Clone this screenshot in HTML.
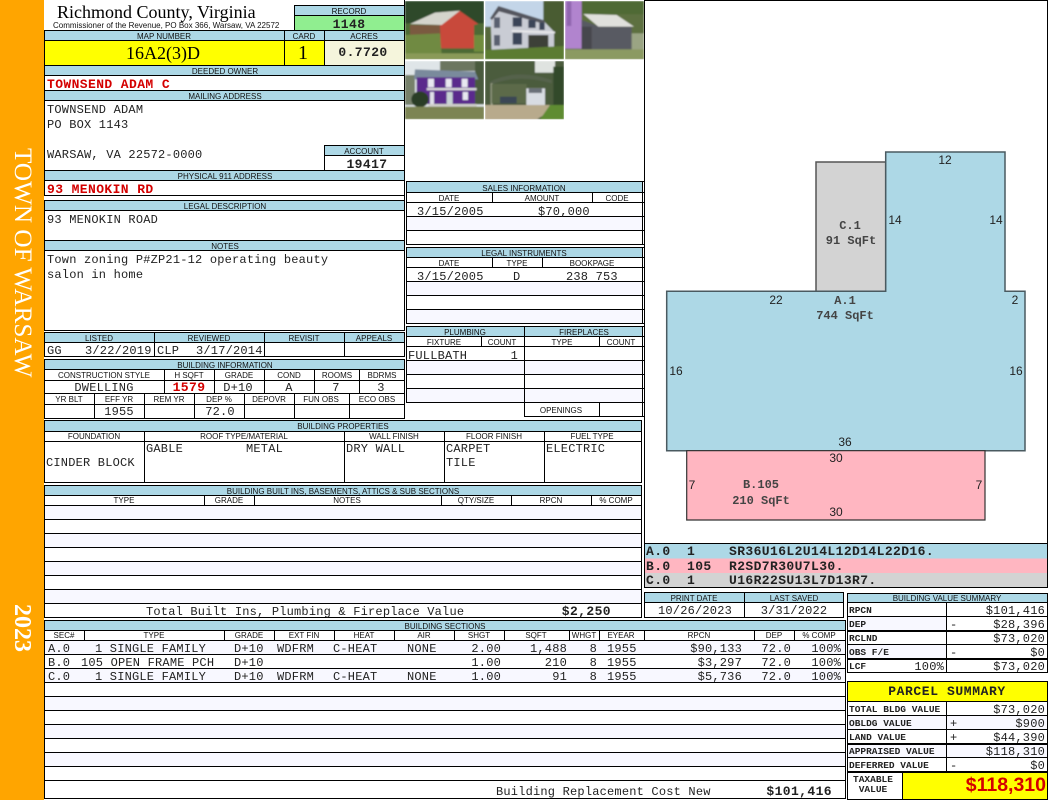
<!DOCTYPE html>
<html><head><meta charset="utf-8"><title>Richmond County, Virginia</title>
<style>
html,body{margin:0;padding:0;background:#fff;width:1050px;height:800px;overflow:hidden}
svg{display:block}
text{white-space:pre}
.l{font:8px "Liberation Sans",sans-serif;fill:#111;text-anchor:middle}
.m{font:12px "Liberation Mono",monospace;letter-spacing:.2px;fill:#222}
.b{font:bold 13px "Liberation Mono",monospace;letter-spacing:.4px;fill:#222}
.red{fill:#d40000}
.s{font:bold 9.5px "Liberation Mono",monospace;fill:#222}
.d{font:12px "Liberation Sans",sans-serif;fill:#222;text-anchor:middle}
.k{font:bold 12px "Liberation Mono",monospace;fill:#444;text-anchor:middle}
.c{text-anchor:middle}.r{text-anchor:end}
.g line{stroke:#000;stroke-width:1;shape-rendering:crispEdges}
.t{stroke:#000;stroke-width:1;fill:none;shape-rendering:crispEdges}
</style></head><body>
<svg width="1050" height="800" viewBox="0 0 1050 800" xmlns="http://www.w3.org/2000/svg">
<rect width="1050" height="800" fill="#fff"/>
<rect width="44" height="800" fill="#ffa500"/>
<text transform="translate(15,148) rotate(90)" font-family="Liberation Serif,serif" font-size="25.2" fill="#fff">TOWN OF WARSAW</text>
<text transform="translate(15,604) rotate(90)" font-family="Liberation Serif,serif" font-weight="bold" font-size="24" fill="#fff">2023</text>

<!-- fills -->
<g fill="#add8e6">
<rect x="294" y="5" width="111" height="10"/>
<rect x="44" y="30" width="361" height="10"/>
<rect x="44" y="65" width="361" height="10"/>
<rect x="44" y="90" width="361" height="10"/>
<rect x="324" y="145" width="81" height="10"/>
<rect x="44" y="170" width="361" height="10"/>
<rect x="44" y="200" width="361" height="10"/>
<rect x="44" y="240" width="361" height="10"/>
<rect x="44" y="332" width="361" height="10"/>
<rect x="44" y="359" width="361" height="10"/>
<rect x="44" y="420" width="598" height="11"/>
<rect x="44" y="485" width="598" height="10"/>
<rect x="44" y="620" width="802" height="10"/>
<rect x="406" y="182" width="237" height="10"/>
<rect x="406" y="247" width="237" height="10"/>
<rect x="406" y="326" width="237" height="10"/>
<rect x="645" y="592" width="198" height="10"/>
<rect x="847" y="593" width="200" height="9"/>
</g>
<rect x="294" y="16" width="111" height="14" fill="#90ee90"/>
<rect x="44" y="41" width="280" height="24" fill="#ff0"/>
<rect x="324" y="41" width="81" height="24" fill="#f5f5dc"/>
<rect x="847" y="682" width="200" height="19" fill="#ff0"/>
<rect x="903" y="771" width="144" height="28" fill="#ff0"/>
<g fill="#f8f8ff">
<rect x="44" y="505" width="598" height="14"/><rect x="44" y="533" width="598" height="14"/><rect x="44" y="561" width="598" height="14"/><rect x="44" y="589" width="598" height="14"/>
<rect x="44" y="640" width="802" height="14"/><rect x="44" y="668" width="802" height="14"/><rect x="44" y="696" width="802" height="14"/><rect x="44" y="724" width="802" height="14"/><rect x="44" y="752" width="802" height="14"/>
<rect x="406" y="216" width="237" height="14"/>
<rect x="406" y="281" width="237" height="14"/><rect x="406" y="309" width="237" height="14"/>
<rect x="406" y="360" width="237" height="14"/><rect x="406" y="388" width="237" height="14"/>
<rect x="847" y="616" width="100" height="14"/><rect x="847" y="644" width="100" height="14"/>
<rect x="847" y="715" width="200" height="14"/><rect x="847" y="743" width="200" height="14"/>
</g>

<!-- photos -->
<defs><filter id="bl" x="0" y="0" width="1" height="1"><feGaussianBlur stdDeviation="2.6"/></filter>
<clipPath id="p1"><rect x="15" y="3" width="237" height="175"/></clipPath>
<clipPath id="p2"><rect x="255" y="3" width="237" height="175"/></clipPath>
<clipPath id="p3"><rect x="495" y="3" width="237" height="175"/></clipPath>
<clipPath id="p4"><rect x="15" y="183" width="237" height="175"/></clipPath>
<clipPath id="p5"><rect x="255" y="183" width="237" height="175"/></clipPath></defs>
<g transform="translate(400,0) scale(.33333)">
<g clip-path="url(#p1)"><g filter="url(#bl)">
<rect x="15" y="3" width="237" height="175" fill="#2e4a2c"/>
<rect x="15" y="70" width="237" height="108" fill="#4e6b34"/>
<polygon points="30,75 120,75 120,110 30,110" fill="#7a5a40"/>
<polygon points="120,75 178,32 235,72 222,75 222,145 122,145" fill="#c8483a"/>
<polygon points="30,72 105,38 180,32 125,75" fill="#d4d4cc"/>
<polygon points="15,105 120,100 125,165 15,165" fill="#6f8a42"/>
<rect x="222" y="105" width="30" height="50" fill="#6f8c3e"/>
<rect x="15" y="160" width="237" height="18" fill="#8a9a58"/>
</g></g>
<g clip-path="url(#p2)"><g filter="url(#bl)">
<rect x="255" y="3" width="237" height="175" fill="#c3d5e8"/>
<rect x="430" y="3" width="62" height="150" fill="#4a5c30"/>
<rect x="255" y="80" width="20" height="70" fill="#54683a"/>
<polygon points="272,55 295,18 430,62 462,95 462,150 370,158 275,150" fill="#c9ccd4"/>
<polygon points="270,55 295,18 435,62 433,72 297,34 276,60" fill="#55565e"/>
<rect x="282" y="52" width="18" height="32" fill="#5a6070"/><rect x="338" y="52" width="28" height="28" fill="#3a4558"/><rect x="385" y="60" width="22" height="24" fill="#3a4558"/><rect x="418" y="68" width="16" height="22" fill="#3a4558"/>
<rect x="282" y="105" width="18" height="32" fill="#5a6070"/><rect x="338" y="98" width="28" height="36" fill="#3a4558"/>
<polygon points="335,90 465,95 465,100 335,96" fill="#e8e8ea"/>
<rect x="385" y="105" width="60" height="48" fill="#3d4038"/>
<polygon points="255,150 492,138 492,178 255,178" fill="#5c7c30"/>
</g></g>
<g clip-path="url(#p3)"><g filter="url(#bl)">
<rect x="495" y="3" width="237" height="175" fill="#5d7040"/>
<rect x="545" y="3" width="187" height="40" fill="#4f6a36"/>
<rect x="690" y="100" width="42" height="50" fill="#9aa483"/>
<rect x="495" y="3" width="50" height="143" fill="#b184ce"/>
<rect x="500" y="3" width="14" height="75" fill="#9066b0"/>
<polygon points="545,60 600,80 695,80 695,155 545,155" fill="#585a62"/>
<rect x="545" y="80" width="30" height="75" fill="#46464e"/>
<polygon points="550,42 650,45 702,80 595,80" fill="#e0e0dc"/>
<rect x="495" y="148" width="237" height="30" fill="#8b9a62"/>
</g></g>
<g clip-path="url(#p4)"><g filter="url(#bl)">
<rect x="15" y="183" width="237" height="175" fill="#dfe5e8"/>
<rect x="120" y="183" width="132" height="30" fill="#6c7660"/>
<rect x="225" y="183" width="27" height="130" fill="#4a5a3c"/>
<rect x="15" y="225" width="30" height="90" fill="#76806a"/>
<polygon points="45,208 225,215 235,238 42,238" fill="#7a8a9c"/>
<rect x="50" y="232" width="175" height="80" fill="#5a2c8c"/>
<rect x="84" y="236" width="18" height="26" fill="#e8e8f0"/><rect x="137" y="236" width="18" height="26" fill="#e8e8f0"/><rect x="185" y="236" width="18" height="26" fill="#e8e8f0"/>
<rect x="80" y="264" width="150" height="7" fill="#d8d8d8"/>
<rect x="140" y="276" width="18" height="36" fill="#c8d4d4"/><rect x="188" y="276" width="16" height="24" fill="#e8e8f0"/><rect x="90" y="276" width="12" height="36" fill="#e0e0e8"/>
<rect x="85" y="312" width="145" height="8" fill="#cfcfca"/>
<ellipse cx="60" cy="298" rx="26" ry="24" fill="#2a3c28"/>
<rect x="15" y="320" width="237" height="38" fill="#7c8452"/>
</g></g>
<g clip-path="url(#p5)"><g filter="url(#bl)">
<rect x="255" y="183" width="237" height="175" fill="#4c5c3c"/>
<rect x="405" y="183" width="60" height="35" fill="#dfe3e0"/>
<rect x="460" y="200" width="32" height="115" fill="#33482c"/>
<path d="M270 245 Q350 205 455 240 L455 250 Q350 220 272 255Z" fill="#55624c"/>
<rect x="272" y="250" width="6" height="65" fill="#a0a48e"/>
<rect x="275" y="252" width="105" height="58" fill="#5c6a4a"/>
<rect x="300" y="290" width="50" height="20" fill="#3a4654"/>
<rect x="379" y="265" width="56" height="50" fill="#d8dce2"/>
<rect x="386" y="265" width="40" height="14" fill="#6a7078"/>
<polygon points="255,315 450,315 440,340 410,358 255,358" fill="#b8aa8c"/>
<polygon points="450,315 492,315 492,358 420,358" fill="#5f8c30"/>
</g></g>
</g>

<!-- sketch -->
<rect x="644.5" y="0.5" width="403" height="543" class="t"/>
<rect x="645" y="544" width="402" height="14.5" fill="#add8e6"/>
<rect x="645" y="558.5" width="402" height="14.5" fill="#ffb6c1"/>
<rect x="645" y="573" width="402" height="14.5" fill="#d3d3d3"/>
<rect x="644.5" y="543.5" width="403" height="44" class="t"/>
<polygon points="816,162 885.7,162 885.7,291.3 816,291.3" fill="#d3d3d3" stroke="#555" stroke-width="1.5"/>
<polygon points="666.7,291.3 885.7,291.3 885.7,152 1005,152 1005,291.3 1025,291.3 1025,450.7 666.7,450.7" fill="#add8e6" stroke="#4a5a60" stroke-width="1.5"/>
<polygon points="686.7,450.7 985,450.7 985,520 686.7,520" fill="#ffb6c1" stroke="#333" stroke-width="1.2"/>
<text class="k" x="850" y="229">C.1</text><text class="k" x="851" y="244">91 SqFt</text>
<text class="k" x="845" y="304">A.1</text><text class="k" x="845" y="319">744 SqFt</text>
<text class="k" x="761" y="488">B.105</text><text class="k" x="761" y="504">210 SqFt</text>
<text class="d" x="945" y="164">12</text><text class="d" x="895" y="224">14</text><text class="d" x="996" y="224">14</text>
<text class="d" x="776" y="304">22</text><text class="d" x="1015" y="304">2</text>
<text class="d" x="676" y="375">16</text><text class="d" x="1016" y="375">16</text>
<text class="d" x="845" y="446">36</text><text class="d" x="836" y="462">30</text><text class="d" x="836" y="516">30</text>
<text class="d" x="692" y="489">7</text><text class="d" x="979" y="489">7</text>
<g class="b"><text class="b" x="646" y="555">A.0</text><text class="b" x="687" y="555">1</text><text class="b" x="729" y="555">SR36U16L2U14L12D14L22D16.</text>
<text class="b" x="646" y="570">B.0</text><text class="b" x="687" y="570">105</text><text class="b" x="729" y="570">R2SD7R30U7L30.</text>
<text class="b" x="646" y="584">C.0</text><text class="b" x="687" y="584">1</text><text class="b" x="729" y="584">U16R22SU13L7D13R7.</text></g>

<!-- grid lines -->
<g class="g">
<line x1="294" x2="405" y1="5.5" y2="5.5"/><line x1="294" x2="405" y1="15.5" y2="15.5"/><line x1="294.5" x2="294.5" y1="5" y2="30"/>
<line x1="44" x2="405" y1="30.5" y2="30.5"/><line x1="44" x2="405" y1="40.5" y2="40.5"/><line x1="44" x2="405" y1="65.5" y2="65.5"/><line x1="44" x2="405" y1="75.5" y2="75.5"/><line x1="44" x2="405" y1="90.5" y2="90.5"/><line x1="44" x2="405" y1="100.5" y2="100.5"/>
<line x1="324" x2="405" y1="145.5" y2="145.5"/><line x1="324" x2="405" y1="155.5" y2="155.5"/><line x1="324.5" x2="324.5" y1="145" y2="170"/>
<line x1="44" x2="405" y1="170.5" y2="170.5"/><line x1="44" x2="405" y1="180.5" y2="180.5"/><line x1="44" x2="405" y1="195.5" y2="195.5"/>
<line x1="284.5" x2="284.5" y1="30" y2="65"/><line x1="324.5" x2="324.5" y1="30" y2="65"/>
<line x1="44" x2="405" y1="200.5" y2="200.5"/><line x1="44" x2="405" y1="210.5" y2="210.5"/><line x1="44" x2="405" y1="240.5" y2="240.5"/><line x1="44" x2="405" y1="250.5" y2="250.5"/><line x1="44" x2="405" y1="330.5" y2="330.5"/>
<line x1="44.5" x2="44.5" y1="30" y2="195"/><line x1="44.5" x2="44.5" y1="200" y2="330"/><line x1="404.5" x2="404.5" y1="0" y2="195"/><line x1="404.5" x2="404.5" y1="195" y2="330"/>
<line x1="44" x2="405" y1="332.5" y2="332.5"/><line x1="44" x2="405" y1="342.5" y2="342.5"/><line x1="44" x2="405" y1="356.5" y2="356.5"/>
<line x1="44.5" x2="44.5" y1="332" y2="356"/><line x1="404.5" x2="404.5" y1="332" y2="356"/><line x1="154.5" x2="154.5" y1="332" y2="356"/><line x1="264.5" x2="264.5" y1="332" y2="356"/><line x1="344.5" x2="344.5" y1="332" y2="356"/>
<line x1="44" x2="405" y1="359.5" y2="359.5"/><line x1="44" x2="405" y1="369.5" y2="369.5"/><line x1="44" x2="405" y1="380.5" y2="380.5"/><line x1="44" x2="405" y1="393.5" y2="393.5"/><line x1="44" x2="405" y1="404.5" y2="404.5"/><line x1="44" x2="405" y1="418.5" y2="418.5"/>
<line x1="44.5" x2="44.5" y1="359" y2="418"/><line x1="404.5" x2="404.5" y1="359" y2="418"/>
<line x1="164.5" x2="164.5" y1="369" y2="393"/><line x1="214.5" x2="214.5" y1="369" y2="393"/><line x1="264.5" x2="264.5" y1="369" y2="393"/><line x1="314.5" x2="314.5" y1="369" y2="393"/><line x1="359.5" x2="359.5" y1="369" y2="393"/>
<line x1="94.5" x2="94.5" y1="393" y2="418"/><line x1="144.5" x2="144.5" y1="393" y2="418"/><line x1="194.5" x2="194.5" y1="393" y2="418"/><line x1="244.5" x2="244.5" y1="393" y2="418"/><line x1="294.5" x2="294.5" y1="393" y2="418"/><line x1="349.5" x2="349.5" y1="393" y2="418"/>
<line x1="44" x2="642" y1="420.5" y2="420.5"/><line x1="44" x2="642" y1="431.5" y2="431.5"/><line x1="44" x2="642" y1="441.5" y2="441.5"/><line x1="44" x2="642" y1="482.5" y2="482.5"/>
<line x1="44.5" x2="44.5" y1="420" y2="482"/><line x1="641.5" x2="641.5" y1="420" y2="482"/>
<line x1="144.5" x2="144.5" y1="431" y2="482"/><line x1="344.5" x2="344.5" y1="431" y2="482"/><line x1="444.5" x2="444.5" y1="431" y2="482"/><line x1="544.5" x2="544.5" y1="431" y2="482"/>
<line x1="44" x2="642" y1="485.5" y2="485.5"/><line x1="44" x2="642" y1="495.5" y2="495.5"/><line x1="44" x2="642" y1="505.5" y2="505.5"/><line x1="44" x2="642" y1="519.5" y2="519.5"/><line x1="44" x2="642" y1="533.5" y2="533.5"/><line x1="44" x2="642" y1="547.5" y2="547.5"/><line x1="44" x2="642" y1="561.5" y2="561.5"/><line x1="44" x2="642" y1="575.5" y2="575.5"/><line x1="44" x2="642" y1="589.5" y2="589.5"/><line x1="44" x2="642" y1="603.5" y2="603.5"/><line x1="44" x2="642" y1="617.5" y2="617.5"/>
<line x1="44.5" x2="44.5" y1="485" y2="617"/><line x1="641.5" x2="641.5" y1="485" y2="617"/>
<line x1="204.5" x2="204.5" y1="495" y2="505"/><line x1="254.5" x2="254.5" y1="495" y2="505"/><line x1="441.5" x2="441.5" y1="495" y2="505"/><line x1="511.5" x2="511.5" y1="495" y2="505"/><line x1="591.5" x2="591.5" y1="495" y2="505"/>
<line x1="44" x2="846" y1="620.5" y2="620.5"/><line x1="44" x2="846" y1="630.5" y2="630.5"/><line x1="44" x2="846" y1="640.5" y2="640.5"/><line x1="44" x2="846" y1="654.5" y2="654.5"/><line x1="44" x2="846" y1="668.5" y2="668.5"/><line x1="44" x2="846" y1="682.5" y2="682.5"/><line x1="44" x2="846" y1="696.5" y2="696.5"/><line x1="44" x2="846" y1="710.5" y2="710.5"/><line x1="44" x2="846" y1="724.5" y2="724.5"/><line x1="44" x2="846" y1="738.5" y2="738.5"/><line x1="44" x2="846" y1="752.5" y2="752.5"/><line x1="44" x2="846" y1="766.5" y2="766.5"/><line x1="44" x2="846" y1="780.5" y2="780.5"/><line x1="44" x2="846" y1="798.5" y2="798.5"/>
<line x1="44.5" x2="44.5" y1="620" y2="799"/><line x1="845.5" x2="845.5" y1="620" y2="799"/>
<line x1="84.5" x2="84.5" y1="630" y2="640"/><line x1="224.5" x2="224.5" y1="630" y2="640"/><line x1="274.5" x2="274.5" y1="630" y2="640"/><line x1="334.5" x2="334.5" y1="630" y2="640"/><line x1="394.5" x2="394.5" y1="630" y2="640"/><line x1="454.5" x2="454.5" y1="630" y2="640"/><line x1="504.5" x2="504.5" y1="630" y2="640"/><line x1="569.5" x2="569.5" y1="630" y2="640"/><line x1="599.5" x2="599.5" y1="630" y2="640"/><line x1="644.5" x2="644.5" y1="630" y2="640"/><line x1="754.5" x2="754.5" y1="630" y2="640"/><line x1="794.5" x2="794.5" y1="630" y2="640"/>
<line x1="406" x2="644" y1="181.5" y2="181.5"/><line x1="406" x2="644" y1="192.5" y2="192.5"/><line x1="406" x2="644" y1="202.5" y2="202.5"/><line x1="406" x2="644" y1="216.5" y2="216.5"/><line x1="406" x2="644" y1="230.5" y2="230.5"/><line x1="406" x2="644" y1="244.5" y2="244.5"/>
<line x1="406.5" x2="406.5" y1="181" y2="245"/><line x1="642.5" x2="642.5" y1="181" y2="245"/><line x1="492.5" x2="492.5" y1="192" y2="202"/><line x1="592.5" x2="592.5" y1="192" y2="202"/>
<line x1="406" x2="644" y1="247.5" y2="247.5"/><line x1="406" x2="644" y1="257.5" y2="257.5"/><line x1="406" x2="644" y1="267.5" y2="267.5"/><line x1="406" x2="644" y1="281.5" y2="281.5"/><line x1="406" x2="644" y1="295.5" y2="295.5"/><line x1="406" x2="644" y1="309.5" y2="309.5"/><line x1="406" x2="644" y1="323.5" y2="323.5"/>
<line x1="406.5" x2="406.5" y1="247" y2="324"/><line x1="642.5" x2="642.5" y1="247" y2="324"/><line x1="492.5" x2="492.5" y1="257" y2="267"/><line x1="542.5" x2="542.5" y1="257" y2="267"/>
<line x1="406" x2="644" y1="326.5" y2="326.5"/><line x1="406" x2="644" y1="336.5" y2="336.5"/><line x1="406" x2="644" y1="346.5" y2="346.5"/><line x1="406" x2="644" y1="360.5" y2="360.5"/><line x1="406" x2="644" y1="374.5" y2="374.5"/><line x1="406" x2="644" y1="388.5" y2="388.5"/><line x1="406" x2="644" y1="402.5" y2="402.5"/>
<line x1="524" x2="644" y1="416.5" y2="416.5"/>
<line x1="406.5" x2="406.5" y1="326" y2="403"/><line x1="642.5" x2="642.5" y1="326" y2="417"/><line x1="524.5" x2="524.5" y1="326" y2="417"/><line x1="481.5" x2="481.5" y1="336" y2="346"/><line x1="599.5" x2="599.5" y1="336" y2="346"/><line x1="599.5" x2="599.5" y1="402" y2="417"/>
<line x1="644" x2="844" y1="592.5" y2="592.5"/><line x1="644" x2="844" y1="602.5" y2="602.5"/><line x1="644" x2="844" y1="617.5" y2="617.5"/><line x1="644.5" x2="644.5" y1="592" y2="618"/><line x1="843.5" x2="843.5" y1="592" y2="618"/><line x1="744.5" x2="744.5" y1="592" y2="618"/>
<line x1="847" x2="1048" y1="593.5" y2="593.5"/><line x1="847" x2="1048" y1="602.5" y2="602.5"/><line x1="847" x2="1048" y1="616.5" y2="616.5"/><line x1="847" x2="1048" y1="644.5" y2="644.5"/><line x1="847" x2="1048" y1="672.5" y2="672.5"/>
<line x1="847.5" x2="847.5" y1="593" y2="673"/><line x1="1047.5" x2="1047.5" y1="593" y2="673"/><line x1="946.5" x2="946.5" y1="602" y2="673"/>
<line x1="847" x2="1048" y1="681.5" y2="681.5"/><line x1="847" x2="1048" y1="701.5" y2="701.5"/><line x1="847" x2="1048" y1="715.5" y2="715.5"/><line x1="847" x2="1048" y1="729.5" y2="729.5"/><line x1="847" x2="1048" y1="757.5" y2="757.5"/><line x1="847" x2="1048" y1="799.5" y2="799.5"/>
<line x1="847.5" x2="847.5" y1="681" y2="800"/><line x1="1047.5" x2="1047.5" y1="681" y2="800"/><line x1="946.5" x2="946.5" y1="701" y2="771"/><line x1="902.5" x2="902.5" y1="771" y2="800"/>
</g>
<g fill="#000"><rect x="847" y="630" width="201" height="2"/><rect x="847" y="658" width="201" height="2"/><rect x="847" y="743" width="201" height="2"/><rect x="847" y="771" width="201" height="2"/></g>

<!-- header text -->
<text x="57" y="18" font-family="Liberation Serif,serif" font-size="18" fill="#000">Richmond County, Virginia</text>
<text x="53" y="28" font-family="Liberation Sans,sans-serif" font-size="8" fill="#111">Commissioner of the Revenue, PO Box 366, Warsaw, VA 22572</text>
<text class="l" x="349" y="14">RECORD</text><text class="b c" x="349" y="28">1148</text>
<text class="l" x="164" y="39">MAP NUMBER</text><text class="l" x="304" y="39">CARD</text><text class="l" x="364" y="39">ACRES</text>
<text x="163" y="59" font-family="Liberation Serif,serif" font-size="18" text-anchor="middle" fill="#000">16A2(3)D</text>
<text x="303" y="59" font-family="Liberation Serif,serif" font-size="20" text-anchor="middle" fill="#000">1</text>
<text class="b c" x="363" y="56">0.7720</text>
<text class="l" x="225" y="74">DEEDED OWNER</text>
<text class="b red" x="47" y="88">TOWNSEND ADAM C</text>
<text class="l" x="225" y="99">MAILING ADDRESS</text>
<text class="m" x="47" y="113">TOWNSEND ADAM</text><text class="m" x="47" y="128">PO BOX 1143</text><text class="m" x="47" y="158">WARSAW, VA 22572-0000</text>
<text class="l" x="364" y="154">ACCOUNT</text><text class="b c" x="367" y="168">19417</text>
<text class="l" x="225" y="179">PHYSICAL 911 ADDRESS</text>
<text class="b red" x="47" y="193">93 MENOKIN RD</text>
<text class="l" x="225" y="209">LEGAL DESCRIPTION</text>
<text class="m" x="47" y="223">93 MENOKIN ROAD</text>
<text class="l" x="225" y="249">NOTES</text>
<text class="m" x="47" y="263">Town zoning P#ZP21-12 operating beauty</text><text class="m" x="47" y="278">salon in home</text>

<text class="l" x="99" y="341">LISTED</text><text class="l" x="209" y="341">REVIEWED</text><text class="l" x="304" y="341">REVISIT</text><text class="l" x="374" y="341">APPEALS</text>
<text class="m" x="47" y="354">GG</text><text class="m" x="85" y="354">3/22/2019</text><text class="m" x="157" y="354">CLP</text><text class="m" x="196" y="354">3/17/2014</text>
<text class="l" x="225" y="368">BUILDING INFORMATION</text>
<text class="l" x="104" y="378">CONSTRUCTION STYLE</text><text class="l" x="189" y="378">H SQFT</text><text class="l" x="239" y="378">GRADE</text><text class="l" x="289" y="378">COND</text><text class="l" x="337" y="378">ROOMS</text><text class="l" x="382" y="378">BDRMS</text>
<text class="m c" x="104" y="391">DWELLING</text><text class="b red c" x="189" y="391">1579</text><text class="m c" x="238" y="391">D+10</text><text class="m c" x="289" y="391">A</text><text class="m c" x="336" y="391">7</text><text class="m c" x="381" y="391">3</text>
<text class="l" x="69" y="402">YR BLT</text><text class="l" x="119" y="402">EFF YR</text><text class="l" x="169" y="402">REM YR</text><text class="l" x="219" y="402">DEP %</text><text class="l" x="269" y="402">DEPOVR</text><text class="l" x="321" y="402">FUN OBS</text><text class="l" x="377" y="402">ECO OBS</text>
<text class="m c" x="119" y="415">1955</text><text class="m c" x="220" y="415">72.0</text>

<text class="l" x="343" y="429">BUILDING PROPERTIES</text>
<text class="l" x="94" y="439">FOUNDATION</text><text class="l" x="244" y="439">ROOF TYPE/MATERIAL</text><text class="l" x="394" y="439">WALL FINISH</text><text class="l" x="494" y="439">FLOOR FINISH</text><text class="l" x="592" y="439">FUEL TYPE</text>
<text class="m" x="46" y="466">CINDER BLOCK</text>
<text class="m" x="146" y="452">GABLE</text><text class="m" x="246" y="452">METAL</text><text class="m" x="346" y="452">DRY WALL</text>
<text class="m" x="446" y="452">CARPET</text><text class="m" x="446" y="466">TILE</text><text class="m" x="546" y="452">ELECTRIC</text>

<text class="l" x="343" y="494">BUILDING BUILT INS, BASEMENTS, ATTICS &amp; SUB SECTIONS</text>
<text class="l" x="124" y="503">TYPE</text><text class="l" x="229" y="503">GRADE</text><text class="l" x="347" y="503">NOTES</text><text class="l" x="476" y="503">QTY/SIZE</text><text class="l" x="551" y="503">RPCN</text><text class="l" x="616" y="503">% COMP</text>
<text class="m" x="146" y="615">Total Built Ins, Plumbing &amp; Fireplace Value</text>
<text class="b r" x="611" y="615">$2,250</text>

<text class="l" x="445" y="629">BUILDING SECTIONS</text>
<text class="l" x="64" y="638">SEC#</text><text class="l" x="154" y="638">TYPE</text><text class="l" x="249" y="638">GRADE</text><text class="l" x="304" y="638">EXT FIN</text><text class="l" x="364" y="638">HEAT</text><text class="l" x="424" y="638">AIR</text><text class="l" x="479" y="638">SHGT</text><text class="l" x="536" y="638">SQFT</text><text class="l" x="584" y="638">WHGT</text><text class="l" x="621" y="638">EYEAR</text><text class="l" x="699" y="638">RPCN</text><text class="l" x="774" y="638">DEP</text><text class="l" x="819" y="638">% COMP</text>

<text class="m" x="48" y="652">A.0</text><text class="m" x="95" y="652">1 SINGLE FAMILY</text><text class="m" x="234" y="652">D+10</text><text class="m" x="277" y="652">WDFRM</text><text class="m" x="333" y="652">C-HEAT</text><text class="m" x="407" y="652">NONE</text><text class="m r" x="501" y="652">2.00</text><text class="m r" x="567" y="652">1,488</text><text class="m r" x="597" y="652">8</text><text class="m" x="607" y="652">1955</text><text class="m r" x="742" y="652">$90,133</text><text class="m r" x="791" y="652">72.0</text><text class="m r" x="841" y="652">100%</text>
<text class="m" x="48" y="666">B.0</text><text class="m" x="81" y="666">105 OPEN FRAME PCH</text><text class="m" x="234" y="666">D+10</text><text class="m r" x="501" y="666">1.00</text><text class="m r" x="567" y="666">210</text><text class="m r" x="597" y="666">8</text><text class="m" x="607" y="666">1955</text><text class="m r" x="742" y="666">$3,297</text><text class="m r" x="791" y="666">72.0</text><text class="m r" x="841" y="666">100%</text>
<text class="m" x="48" y="680">C.0</text><text class="m" x="95" y="680">1 SINGLE FAMILY</text><text class="m" x="234" y="680">D+10</text><text class="m" x="277" y="680">WDFRM</text><text class="m" x="333" y="680">C-HEAT</text><text class="m" x="407" y="680">NONE</text><text class="m r" x="501" y="680">1.00</text><text class="m r" x="567" y="680">91</text><text class="m r" x="597" y="680">8</text><text class="m" x="607" y="680">1955</text><text class="m r" x="742" y="680">$5,736</text><text class="m r" x="791" y="680">72.0</text><text class="m r" x="841" y="680">100%</text>
<text class="m" x="496" y="795">Building Replacement Cost New</text><text class="b r" x="832" y="795">$101,416</text>

<!-- right column text -->
<text class="l" x="524" y="191">SALES INFORMATION</text>
<text class="l" x="449" y="201">DATE</text><text class="l" x="542" y="201">AMOUNT</text><text class="l" x="617" y="201">CODE</text>
<text class="m" x="417" y="215">3/15/2005</text><text class="m" x="538" y="215">$70,000</text>
<text class="l" x="524" y="256">LEGAL INSTRUMENTS</text>
<text class="l" x="449" y="266">DATE</text><text class="l" x="517" y="266">TYPE</text><text class="l" x="592" y="266">BOOKPAGE</text>
<text class="m" x="417" y="280">3/15/2005</text><text class="m" x="513" y="280">D</text><text class="m" x="566" y="280">238 753</text>
<text class="l" x="465" y="335">PLUMBING</text><text class="l" x="584" y="335">FIREPLACES</text>
<text class="l" x="444" y="345">FIXTURE</text><text class="l" x="502" y="345">COUNT</text><text class="l" x="562" y="345">TYPE</text><text class="l" x="621" y="345">COUNT</text>
<text class="m" x="408" y="359">FULLBATH</text><text class="m r" x="518" y="359">1</text>
<text class="l" x="561" y="413">OPENINGS</text>

<text class="l" x="694" y="601">PRINT DATE</text><text class="l" x="794" y="601">LAST SAVED</text>
<text class="m c" x="695" y="614">10/26/2023</text><text class="m c" x="794" y="614">3/31/2022</text>

<text class="l" x="947" y="601">BUILDING VALUE SUMMARY</text>
<text class="s" x="849" y="613">RPCN</text><text class="m r" x="1045" y="614">$101,416</text>
<text class="s" x="849" y="627">DEP</text><text class="m" x="950" y="628">-</text><text class="m r" x="1045" y="628">$28,396</text>
<text class="s" x="849" y="641">RCLND</text><text class="m r" x="1045" y="642">$73,020</text>
<text class="s" x="849" y="655">OBS F/E</text><text class="m" x="950" y="656">-</text><text class="m r" x="1045" y="656">$0</text>
<text class="s" x="849" y="669">LCF</text><text class="m r" x="944" y="670">100%</text><text class="m r" x="1045" y="670">$73,020</text>

<text class="b c" x="947" y="695" style="letter-spacing:.6px">PARCEL SUMMARY</text>
<text class="s" x="849" y="712">TOTAL BLDG VALUE</text><text class="m r" x="1045" y="713">$73,020</text>
<text class="s" x="849" y="726">OBLDG VALUE</text><text class="m" x="950" y="727">+</text><text class="m r" x="1045" y="727">$900</text>
<text class="s" x="849" y="740">LAND VALUE</text><text class="m" x="950" y="741">+</text><text class="m r" x="1045" y="741">$44,390</text>
<text class="s" x="849" y="754">APPRAISED VALUE</text><text class="m r" x="1045" y="755">$118,310</text>
<text class="s" x="849" y="768">DEFERRED VALUE</text><text class="m" x="950" y="769">-</text><text class="m r" x="1045" y="769">$0</text>
<text class="s c" x="873" y="782">TAXABLE</text><text class="s c" x="873" y="792">VALUE</text>
<text x="1046" y="791" font-family="Liberation Sans,sans-serif" font-weight="bold" font-size="19.5" text-anchor="end" fill="#d40000">$118,310</text>
</svg>
</body></html>
